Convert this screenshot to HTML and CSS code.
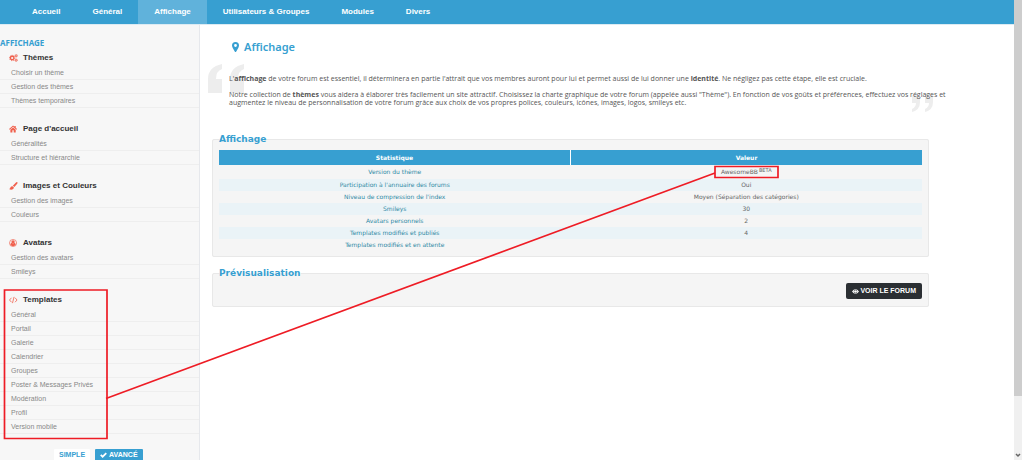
FILE: index.html
```html
<!DOCTYPE html>
<html lang="fr">
<head>
<meta charset="utf-8">
<title>Affichage - Panneau d'administration</title>
<link rel="stylesheet" href="styles.css">
</head>
<body>
<div class="window">
  <div class="page">
    <nav class="nav">
      <a href="#">Accueil</a>
      <a href="#">Général</a>
      <a href="#" class="active">Affichage</a>
      <a href="#">Utilisateurs &amp; Groupes</a>
      <a href="#">Modules</a>
      <a href="#">Divers</a>
    </nav>
    <div class="body">
      <aside class="side">
        <h2 class="side-title">AFFICHAGE</h2>
        <section class="group">
          <h3><svg class="ico" viewBox="0 0 20 18"><g fill="none" stroke="currentColor"><circle cx="7" cy="9" r="4" stroke-width="3"/><circle cx="7" cy="9" r="6" stroke-width="2" stroke-dasharray="2.4 2.3"/><circle cx="16" cy="4" r="2" stroke-width="2"/><circle cx="16" cy="4" r="3.4" stroke-width="1" stroke-dasharray="1.5 1.2"/><circle cx="16" cy="14" r="2" stroke-width="2"/><circle cx="16" cy="14" r="3.4" stroke-width="1" stroke-dasharray="1.5 1.2"/></g></svg>Thèmes</h3>
          <a href="#">Choisir un thème</a>
          <a href="#">Gestion des thèmes</a>
          <a href="#">Thèmes temporaires</a>
        </section>
        <section class="group">
          <h3><svg class="ico" viewBox="0 0 20 18"><path fill="currentColor" d="M9 1 0 9l1.500 1.500L9 4l7.500 6.500L18 9l-3-2.700V2h-3v1.700zM9 5.500 3 10.600V17h4.500v-5h3v5H15v-6.400z"/></svg>Page d'accueil</h3>
          <a href="#">Généralités</a>
          <a href="#">Structure et hiérarchie</a>
        </section>
        <section class="group">
          <h3><svg class="ico" viewBox="0 0 20 18"><path fill="currentColor" d="M18.500.500c1 .8.800 2-.2 3.500L12 11.500 8.500 8.500 15.500 1.200c1-1 2.200-1.400 3-.7zM7.500 9.500l3.500 3c0 4-6 7-11 3.500 2.500-.5 2.500-2.500 3.500-4.500.8-1.500 2.500-2.200 4-2z"/></svg>Images et Couleurs</h3>
          <a href="#">Gestion des images</a>
          <a href="#">Couleurs</a>
        </section>
        <section class="group">
          <h3><svg class="ico" viewBox="0 0 20 18"><circle cx="9" cy="9" r="8" fill="none" stroke="currentColor" stroke-width="1.500"/><circle cx="9" cy="6.500" r="3.800" fill="currentColor"/><path fill="currentColor" d="M3 13c0-3 1.500-4 3-4 2 1.500 4 1.500 6 0 1.500 0 3 1 3 4-3 4-9 4-12 0z"/></svg>Avatars</h3>
          <a href="#">Gestion des avatars</a>
          <a href="#">Smileys</a>
        </section>
        <section class="group">
          <h3><svg class="ico" viewBox="0 0 20 18"><path fill="none" stroke="currentColor" stroke-width="1.800" d="M5.500 4 1 9l4.500 5M13.500 4 18 9l-4.500 5M11.300 2 7.700 16"/></svg>Templates</h3>
          <a href="#">Général</a>
          <a href="#">Portail</a>
          <a href="#">Galerie</a>
          <a href="#">Calendrier</a>
          <a href="#">Groupes</a>
          <a href="#">Poster &amp; Messages Privés</a>
          <a href="#">Modération</a>
          <a href="#">Profil</a>
          <a href="#">Version mobile</a>
        </section>
        <div class="modes">
          <button type="button" class="mode">SIMPLE</button>
          <button type="button" class="mode on"><svg class="check" viewBox="0 0 16 14"><path fill="none" stroke="currentColor" stroke-width="4" d="m1.500 6.500 4.500 4.500L14.500 2.500"/></svg>AVANCÉ</button>
        </div>
      </aside>
      <main class="main">
        <h1 class="title"><svg class="pin" viewBox="0 0 14 20"><path fill="currentColor" fill-rule="evenodd" d="M7 0a7 7 0 0 1 7 7c0 2-.8 3.500-1.500 5L8.500 19q-1.500 2-3 0L1.500 12C.800 10.500 0 9 0 7a7 7 0 0 1 7-7zm0 4.200a2.800 2.800 0 1 0 0 5.600 2.800 2.800 0 0 0 0-5.600z"/></svg>Affichage</h1>
        <div class="intro">
          <svg class="quote open" viewBox="0 0 36 29"><path fill="currentColor" d="M14 0v5Q8 7 8 15h6v14H0V15Q0 3 14 0z"/><path fill="currentColor" d="M36 0v5Q30 7 30 15h6v14H22V15Q22 3 36 0z"/></svg>
          <svg class="quote close" viewBox="0 0 22 17"><path fill="currentColor" d="M1 0h8v7q0 8-8 10v-3q4-2 4-6H1zM14 0h8v7q0 8-8 10v-3q4-2 4-6h-4z"/></svg>
          <p>L'<b>affichage</b> de votre forum est essentiel, il déterminera en partie l'attrait que vos membres auront pour lui et permet aussi de lui donner une <b>identité</b>. Ne négligez pas cette étape, elle est cruciale.</p>
          <p>Notre collection de <b>thèmes</b> vous aidera à élaborer très facilement un site attractif. Choisissez la charte graphique de votre forum (appelée aussi "Thème"). En fonction de vos goûts et préférences, effectuez vos réglages et augmentez le niveau de personnalisation de votre forum grâce aux choix de vos propres polices, couleurs, icônes, images, logos, smileys etc.</p>
        </div>
        <fieldset class="box">
          <legend>Affichage</legend>
          <table class="stats">
            <thead><tr><th>Statistique</th><th>Valeur</th></tr></thead>
            <tbody>
              <tr><td>Version du thème</td><td>AwesomeBB<sup>BETA</sup></td></tr>
              <tr><td>Participation à l'annuaire des forums</td><td>Oui</td></tr>
              <tr><td>Niveau de compression de l'index</td><td>Moyen (Séparation des catégories)</td></tr>
              <tr><td>Smileys</td><td>30</td></tr>
              <tr><td>Avatars personnels</td><td>2</td></tr>
              <tr><td>Templates modifiés et publiés</td><td>4</td></tr>
              <tr><td>Templates modifiés et en attente</td><td></td></tr>
            </tbody>
          </table>
        </fieldset>
        <fieldset class="box preview">
          <legend>Prévisualisation</legend>
          <button type="button" class="view"><svg class="eye" viewBox="0 0 18 12"><path fill="currentColor" fill-rule="evenodd" d="M0 6Q9-6 18 6 9 18 0 6zm9-4.500a4.500 4.500 0 1 0 0 9 4.500 4.500 0 0 0 0-9z"/><circle cx="9" cy="6" r="3.500" fill="currentColor"/></svg>VOIR LE FORUM</button>
        </fieldset>
      </main>
    </div>
  </div>
  <div class="scroll"><div class="thumb"></div><svg class="down" viewBox="0 0 6 5"><path fill="none" stroke="#666" stroke-width="1.500" d="m1 1 2 2 2-2"/></svg></div>
</div>
<svg class="marks" viewBox="0 0 1024 460"><g fill="none" stroke="#ee1c25" stroke-width="1.700"><path d="M4.500 290h102.500v148.500H4.500zM715 166.500h63v11h-63z"/><path d="M106 398.500 715 173"/></g></svg>
</body>
</html>
```
FILE: styles.css
```css
* { box-sizing: border-box; }
body { margin: 0; background: #fff; font-family: "Liberation Sans", Arial, sans-serif; font-size: 7px; overflow: hidden; }
h1, h2, h3, p { margin: 0; }
a { text-decoration: none; }
button { border: 0; font: bold 7px/8px "Liberation Sans", Arial, sans-serif; display: flex; align-items: center; }
.window { display: flex; height: 100vh; overflow: hidden; }
.page { flex: 1; display: flex; flex-direction: column; min-width: 0; }
.nav { display: flex; background: #379fd1; height: 24px; flex: none; padding-left: 16px; box-shadow: 0 1px 0 #dcebf3; position: relative; }
.nav a { padding: 0 16px; font-size: 8px; line-height: 24px; font-weight: bold; color: #fff; }
.nav .active { background: #60b2db; }
.body { display: flex; flex: 1; min-height: 0; }
.side { width: 200px; flex: none; background: #f7f7f7; border-right: 1px solid #e6e8ec; padding-top: 14px; }
.side-title { margin-bottom: 2px; font: bold 8px/10px "Noto Sans", sans-serif; color: #379fd1; }
.group { padding-bottom: 13px; }
.group h3 { display: flex; align-items: center; gap: 5px; padding-left: 9px; font-size: 8px; line-height: 8px; height: 16px; color: #333; }
.ico { width: 9px; height: 8px; color: #f0604d; }
.group a { display: block; height: 14px; line-height: 14px; padding-left: 11px; color: #888; border-bottom: 1px solid #eee; }
.modes { display: flex; gap: 5px; margin-top: 2px; padding-left: 54px; }
.mode { background: #fff; color: #379fd1; padding: 2px 5px; height: 12px; border-radius: 1px; }
.mode.on { background: #379fd1; color: #fff; }
.check { width: 7px; height: 6px; margin-right: 2px; }
.main { flex: 1; min-width: 0; padding: 16px 85px 0 12px; }
.title { display: flex; align-items: center; gap: 5px; padding-left: 20px; font: 600 11px/14px "Noto Sans", sans-serif; color: #379fd1; }
.pin { width: 7px; height: 10px; }
.intro { position: relative; margin: 21px 0 27px; padding: 0 0 0 17px; font: 7px/8px "Open Sans", sans-serif; color: #555; }
.intro p { position: relative; margin: 0 -24px 8px 0; }
.intro p:last-child { margin-bottom: 0; }
.quote { position: absolute; color: #ededed; }
.open { width: 36px; height: 29px; left: -4px; top: -11px; }
.close { width: 22px; height: 17px; right: -4px; top: 20px; }
.box { margin: 0 0 11px; padding: 6px 6px 5px; min-width: 0; border: 1px solid #e8e8e8; border-radius: 2px; background: #f5f5f5; }
.box legend { padding: 0; font: bold 9px/10px "DejaVu Sans", sans-serif; color: #379fd1; }
.preview { padding: 5px 6px 7px; }
.stats { width: 100%; border-collapse: collapse; table-layout: fixed; font: 6px/8px "DejaVu Sans", sans-serif; text-align: center; color: #666; }
.stats th { background: #379fd1; color: #fff; height: 15px; padding: 0; }
.stats th + th { border-left: 1px solid #fff; }
.stats td { height: 12px; padding: 0; }
.stats tr:first-child td { height: 14px; }
.stats td:first-child { color: #2f8aa5; }
.stats tr:nth-child(even) td { background: #eaf3f7; }
.stats sup { font-size: 5px; line-height: 0; vertical-align: 2px; margin-left: 1px; }
.view { margin-left: auto; background: #2b2f33; color: #fff; padding: 4px 6px; border-radius: 2px; }
.eye { width: 7px; height: 5px; margin-right: 1px; }
.scroll { width: 10px; flex: none; background: #f0f0f0; border-right: 2px solid #fff; display: flex; flex-direction: column; justify-content: space-between; align-items: center; }
.thumb { width: 100%; height: 86%; background: #cdcdcd; }
.down { width: 6px; height: 5px; margin-bottom: 2px; }
.marks { position: absolute; left: 0; top: 0; width: 1024px; height: 460px; pointer-events: none; }
```
